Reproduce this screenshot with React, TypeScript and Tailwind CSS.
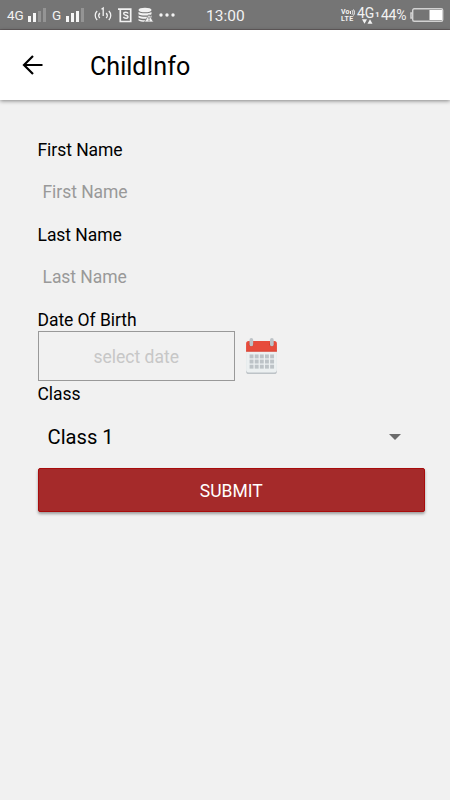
import type { ReactNode } from "react";

function Signal({ level, className }: { level: number; className: string }) {
  return (
    <svg className={className} width="19" height="15" viewBox="0 0 19 15">
      {[0, 1, 2, 3].map((i) => (
        <rect
          key={i}
          x={i * 5}
          y={[8, 5, 3, 0][i]}
          width="3"
          height={[6, 9, 11, 14][i]}
          fill={i < level ? "#f6f6f6" : "#949494"}
        />
      ))}
    </svg>
  );
}

function StatusBar() {
  return (
    <div className="relative flex h-[30px] items-center border-b border-[#655f60] bg-[#757575] text-[#f2f2f2]">
      <span className="ml-[7px] w-[21px] pt-px text-[13.500px]">4G</span>
      <Signal level={2} className="mt-px" />
      <span className="ml-[5px] w-[14px] pt-px text-[13.500px]">G</span>
      <Signal level={3} className="mt-px" />

      {/* hotspot */}
      <svg className="ml-[9px]" width="18" height="18" viewBox="0 0 18 18" fill="none" stroke="#f2f2f2" strokeWidth="1.300">
        <path d="M3.200 5C.6 7.500.6 11.500 3.200 14M14.800 5c2.600 2.500 2.600 6.500 0 9M5.800 7c-1.300 1.500-1.300 3.500 0 5M12.200 7c1.300 1.500 1.300 3.500 0 5" />
        <path d="M7.500 3.200 9.200 2v8" />
      </svg>
      {/* sim card */}
      <svg className="ml-[6px]" width="15" height="16" viewBox="0 0 15 16" fill="none" stroke="#f2f2f2">
        <path d="M0 2.200h12.700v12.300H2.300V2" strokeWidth="1.700" />
        <path d="M10.200 6.500C9.800 5.500 8.800 5.200 7.800 5.200 6.500 5.200 5.700 5.800 5.700 6.700c0 2 4.300 1 4.300 3 0 1-.900 1.600-2.200 1.600-1.200 0-2-.5-2.400-1.400" strokeWidth="1.400" />
      </svg>
      {/* storage warning */}
      <svg className="ml-[5px]" width="16" height="16" viewBox="0 0 16 16">
        <ellipse cx="7" cy="3" rx="6.500" ry="2.300" fill="#f2f2f2" />
        <path d="M.5 5c2 1.700 11 1.700 13 0v2.200c-2 1.700-11 1.700-13 0zM.5 8.500c2 1.700 11 1.700 13 0v2c-2 1.700-11 1.700-13 0zM.5 12c2 1.700 11 1.700 13 0v1.500c-2 1.700-11 1.700-13 0z" fill="#f2f2f2" />
        <path d="M11 7.500 15.500 15h-9z" fill="#f2f2f2" stroke="#757575" strokeWidth=".7" />
        <path d="M11 10v2.500M11 13.200v1" stroke="#757575" />
      </svg>
      <svg className="ml-[5px]" width="16" height="4" viewBox="0 0 16 4" fill="#f2f2f2">
        <circle cx="2" cy="2" r="1.700" />
        <circle cx="8" cy="2" r="1.700" />
        <circle cx="14" cy="2" r="1.700" />
      </svg>

      <span className="absolute left-[206px] top-[5px] text-[15.500px] leading-[22px]">13:00</span>

      <div className="ml-auto flex h-full">
        <div className="mt-[8px] w-[16px] text-[7px] font-bold leading-[8px]">
          <div className="flex h-[8px] items-center">
            Vo
            <svg className="ml-px" width="5" height="7" viewBox="0 0 5 7" fill="none" stroke="#f2f2f2">
              <path d="M.5 2v3M2 1.200c1 1.500 1 3 0 4.500M3.500.500c1.300 2 1.300 4 0 6" />
            </svg>
          </div>
          <div className="-mt-px h-[8px] tracking-[.500px]">LTE</div>
        </div>
        <div className="relative w-[24px]">
          <span className="absolute left-0 top-[5px] text-[14px] leading-[16px] tracking-[-.200px]">4G</span>
          <span className="absolute left-[18px] top-[10px] text-[8px] font-bold leading-[9px]">1</span>
          <svg className="absolute left-[5px] top-[19px]" width="11" height="5" viewBox="0 0 11 5" fill="#f2f2f2">
            <path d="M0 .3h5L2.500 4.700zM5.500 4.700h5L8 .3z" />
          </svg>
        </div>
        <span className="mt-[5px] w-[29px] text-[14px] leading-[21px] tracking-[-.300px]">44%</span>
        <svg className="mr-[6px] mt-[8px]" width="34" height="15" viewBox="0 0 34 15">
          <path d="M2 5H1v5h1" fill="none" stroke="#d2d2d2" strokeWidth="1.500" />
          <rect x="2.700" y=".700" width="30" height="12.600" rx="1.500" fill="#757575" stroke="#d2d2d2" strokeWidth="1.400" />
          <rect x="19.500" y="2" width="12.500" height="10" fill="#fff" />
        </svg>
      </div>
    </div>
  );
}

function Label({ children }: { children: ReactNode }) {
  return <div className="h-6 text-[17.500px] leading-6 tracking-[-.050px]">{children}</div>;
}

function CalendarIcon() {
  return (
    <svg width="33" height="38" viewBox="0 0 32 37">
      <rect x="1" y="8" width="30" height="28" rx="2.500" fill="#bdc3c7" />
      <path d="M1 12h30v20a2.500 2.500 0 0 1-2.500 2.500h-25A2.500 2.500 0 0 1 1 32z" fill="#ecf0f1" />
      <path d="M1 14V6.500A2.500 2.500 0 0 1 3.500 4h25A2.500 2.500 0 0 1 31 6.500V14z" fill="#e74c3c" />
      <path d="M1 13.200h30v1H1z" fill="#d5483a" />
      <circle cx="6" cy="7" r="2.300" fill="#c0392b" />
      <circle cx="26" cy="7" r="2.300" fill="#c0392b" />
      <rect x="4.300" y="1" width="3.600" height="8" rx="1.800" fill="#bdc3c7" />
      <rect x="24.300" y="1" width="3.600" height="8" rx="1.800" fill="#bdc3c7" />
      {[17, 22, 27].map((y) =>
        [4, 9, 14, 19, 24].map((x) => (
          <rect key={`${x}-${y}`} x={x + 0.4} y={y} width="3.800" height="3.800" fill="#bdc3c7" />
        ))
      )}
    </svg>
  );
}

export default function App() {
  return (
    <div className="flex h-[800px] w-[450px] flex-col overflow-hidden bg-[#f1f1f1] font-[Roboto,sans-serif] text-black">
      <StatusBar />

      <header className="z-10 flex h-[70px] items-center bg-white shadow-[0_1px_4px_rgba(0,0,0,0.45)]">
        <svg className="ml-[22px]" width="22" height="20" viewBox="0 0 22 20" fill="none" stroke="#000" strokeWidth="2.200">
          <path d="M20.500 10H2.500M11 1 2 10l9 9" />
        </svg>
        <h1 className="ml-[46px] mt-[3px] text-[25.100px] leading-8">ChildInfo</h1>
      </header>

      <main className="flex flex-col pl-[37.500px] pr-[25px] pt-[38px]">
        <Label>First Name</Label>
        <div className="h-[61px] pl-[5px] text-[17.500px] leading-[60px] tracking-[-.050px] text-[#999]">First Name</div>
        <Label>Last Name</Label>
        <div className="h-[61px] pl-[5px] text-[17.500px] leading-[60px] tracking-[-.050px] text-[#999]">Last Name</div>
        <div className="h-[23px] text-[17.500px] leading-6 tracking-[-.050px]">Date Of Birth</div>

        <div className="flex h-[50px] items-center">
          <div className="flex h-full w-[197.500px] items-center justify-center border border-[#999] pt-[2px] text-[17.500px] text-[#c7c7c7]">
            select date
          </div>
          <div className="-mt-px ml-[10px]">
            <CalendarIcon />
          </div>
        </div>

        <div className="h-6 text-[17.500px] leading-[26px] tracking-[-.050px]">Class</div>
        <div className="flex h-[63px] items-center justify-between pl-[10px] pr-[24px] text-[20.200px]">
          <span className="pt-[2px]">Class 1</span>
          <svg width="12" height="6" viewBox="0 0 12 6">
            <path d="M0 0h12L6 6z" fill="#6b6b6b" />
          </svg>
        </div>

        <button className="h-[44px] rounded-[2px] border border-[#a80c0c] bg-[#a52a2a] pt-[2px] text-[17.500px] text-white shadow-[0_2px_3px_rgba(0,0,0,0.35)]">
          SUBMIT
        </button>
      </main>
    </div>
  );
}
